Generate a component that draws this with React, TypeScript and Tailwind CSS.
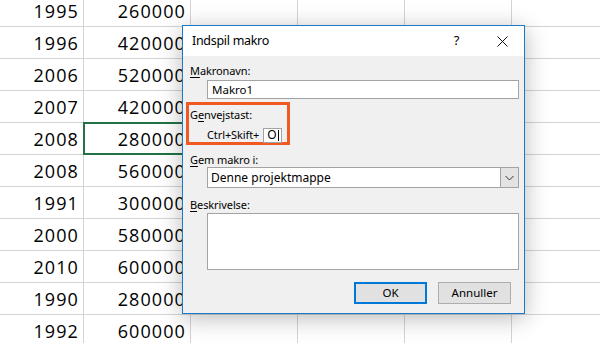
import type { ReactNode } from 'react';

const rows: [string, string][] = [
  ['1995', '260000'],
  ['1996', '420000'],
  ['2006', '520000'],
  ['2007', '420000'],
  ['2008', '280000'],
  ['2008', '560000'],
  ['1991', '300000'],
  ['2000', '580000'],
  ['2010', '600000'],
  ['1990', '280000'],
  ['1992', '600000'],
];

const ui = "font-['Noto_Sans',sans-serif]";

function Cell({ w, children, selected }: { w: string; children?: ReactNode; selected?: boolean }) {
  return (
    <div
      className={`relative flex h-full shrink-0 items-end justify-end border-r border-[#d4d4d4] pr-[4px] pb-[6px] ${w}`}
    >
      {children}
      {selected && <div className="absolute -top-px -left-px h-[33px] w-[108px] border-2 border-[#217346]" />}
    </div>
  );
}

function Label({ k, rest, pre = '' }: { k: string; rest: string; pre?: string }) {
  return (
    <div className="h-[16px] text-[11px] leading-[16px] tracking-[-0.1px] text-black">
      {pre}
      <span className="underline underline-offset-2">{k}</span>
      {rest}
    </div>
  );
}

export default function App() {
  return (
    <div className="relative h-[343px] w-[600px] overflow-hidden bg-white">
      {/* sheet */}
      <div className="-mt-[5px] flex flex-col font-['Open_Sans',sans-serif] text-[18px] leading-none tracking-[1.1px] text-black">
        {rows.map(([a, b], i) => (
          <div key={i} className="flex h-[32px] border-b border-[#d4d4d4]">
            <Cell w="w-[84px]">{a}</Cell>
            <Cell w="w-[107px]" selected={i === 4}>
              {b}
            </Cell>
            <Cell w="w-[107px]" />
            <Cell w="w-[107px]" />
            <Cell w="w-[107px]" />
            <Cell w="w-[107px]" />
          </div>
        ))}
      </div>

      {/* dialog */}
      <div
        className={`absolute top-[25px] left-[182px] flex h-[289px] w-[343px] flex-col border border-[#1979ca] bg-[#f0f0f0] shadow-[0_4px_22px_rgba(0,0,0,0.28)] ${ui}`}
      >
        <div className="flex h-[30px] shrink-0 items-center bg-white pl-[9px] text-[12.5px] tracking-[-0.3px] text-black">
          <span className="flex-1">Indspil makro</span>
          <span className="mr-[38px] text-[13px]">?</span>
          <svg width="11" height="11" viewBox="0 0 11 11" className="mr-[16px]">
            <path d="M0.5 0.5 L10.5 10.5 M10.5 0.5 L0.5 10.5" stroke="#111" strokeWidth="1" />
          </svg>
        </div>

        <div className="flex flex-1 flex-col px-[7px] pt-[7px]">
          <Label k="M" rest="akronavn:" />
          <div className="mt-[1px] ml-[17px] flex h-[19px] w-[312px] items-center border border-[#a3a3a3] bg-white pl-[4px] text-[11.5px] text-black">
            Makro1
          </div>

          <div className="mt-[3px] -ml-[4px] flex h-[43px] w-[104px] flex-col border-[3px] border-[#f05a22] pl-[1px]">
            <div className="mt-[2px]">
              <Label pre="G" k="e" rest="nvejstast:" />
            </div>
            <div className="mt-[4px] flex items-center text-[11px] tracking-[-0.1px] text-black">
              <span className="ml-[17px]">Ctrl+Skift+</span>
              <div className="ml-[4px] flex h-[15px] w-[19px] items-center border border-[#a3a3a3] bg-white pl-[3px] text-[12px]">
                O<span className="ml-[1px] h-[11px] w-px bg-black" />
              </div>
            </div>
          </div>

          <div className="mt-[7px]">
            <Label k="G" rest="em makro i:" />
          </div>
          <div className="-mt-[1px] ml-[17px] flex h-[21px] w-[312px] items-center border border-[#a3a3a3] bg-white text-[12px] text-black">
            <span className="flex-1 pl-[3px]">Denne projektmappe</span>
            <div className="flex h-full w-[18px] items-center justify-center border-l border-[#a3a3a3] bg-[#e3e3e3]">
              <svg width="9" height="6" viewBox="0 0 9 6">
                <path d="M0.5 1 L4.5 5 L8.5 1" fill="none" stroke="#333" strokeWidth="1" />
              </svg>
            </div>
          </div>

          <div className="mt-[9px]">
            <Label k="B" rest="eskrivelse:" />
          </div>
          <div className="ml-[17px] h-[57px] w-[312px] border border-[#a3a3a3] bg-white" />

          <div className="mt-[12px] flex justify-end gap-[11px] pr-[6px] text-[11.5px] text-black">
            <div className="flex h-[22px] w-[73px] items-center justify-center border-2 border-[#0078d7] bg-[#e1e1e1]">
              OK
            </div>
            <div className="flex h-[22px] w-[73px] items-center justify-center border border-[#adadad] bg-[#e1e1e1]">
              Annuller
            </div>
          </div>
        </div>
      </div>
    </div>
  );
}
